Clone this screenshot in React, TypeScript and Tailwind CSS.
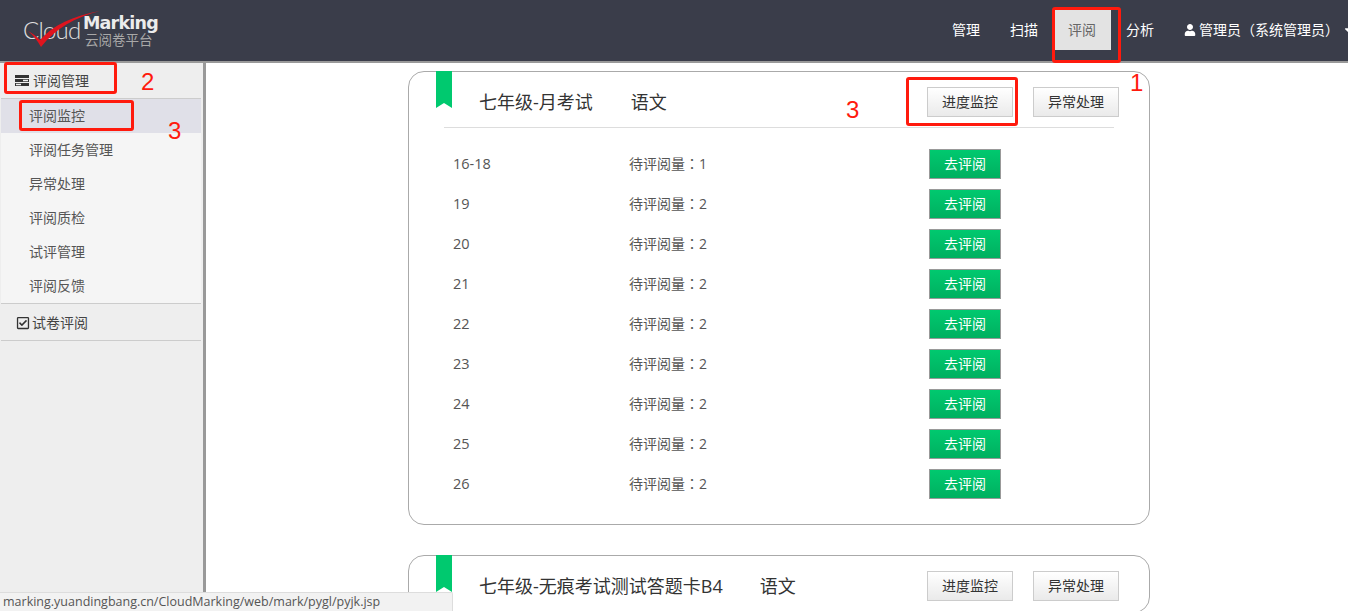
import { FaCaretDown, FaRegCheckSquare, FaUser } from "react-icons/fa";

const navItems = ["管理", "扫描", "评阅", "分析"];
const menuItems = ["评阅监控", "评阅任务管理", "异常处理", "评阅质检", "试评管理", "评阅反馈"];
const tasks = [
  { no: "16-18", count: 1 },
  { no: "19", count: 2 },
  { no: "20", count: 2 },
  { no: "21", count: 2 },
  { no: "22", count: 2 },
  { no: "23", count: 2 },
  { no: "24", count: 2 },
  { no: "25", count: 2 },
  { no: "26", count: 2 },
];

// TC glyphs have the centred full-width punctuation seen in the picture
const punct = "leading-none font-['Noto_Sans_CJK_TC',sans-serif]";

function Logo() {
  return (
    <div className="relative mt-[5px] ml-[23px] h-[50px] w-[140px] shrink-0">
      <span className="absolute top-[10px] left-0 text-[24px] leading-[30px] font-light tracking-[-0.8px] text-[#e0e0e0] font-['Lato',sans-serif]">
        Cloud
      </span>
      <span className="absolute top-[9px] left-[60px] text-[17.5px] leading-[18px] font-bold tracking-[-0.8px] text-[#ececec] font-['DejaVu_Sans',sans-serif]">
        Marking
      </span>
      <span className="absolute top-[27px] left-[62px] text-[13.5px] leading-[14px] text-[#a8a8a8] font-['Noto_Sans_CJK_SC',sans-serif]">
        云阅卷平台
      </span>
      <svg className="absolute top-0 left-0" width="80" height="46" viewBox="0 0 80 46">
        <path d="M5 26 C9 28 13 31 17 35 C30 20 50 11 77 6 C52 12 32 24 18 42 C14 35 10 30 5 26 Z" fill="#e0141e" />
      </svg>
    </div>
  );
}

function Header() {
  return (
    <header className="flex h-[61px] shrink-0 items-start justify-between overflow-hidden bg-[#3a3d4a]">
      <Logo />
      <nav className="mt-[10px] flex h-10 w-[411px] shrink-0 items-stretch overflow-hidden text-sm whitespace-nowrap text-white">
        {navItems.map((item) => (
          <a
            key={item}
            className={`flex items-center px-[15px] ${item === "评阅" ? "bg-[#e3e3e3] text-[#666]" : ""}`}
          >
            {item}
          </a>
        ))}
        <a className="flex shrink-0 items-center gap-[3px] pl-[15px]">
          <FaUser className="size-3" />
          <span>
            管理员<span className={punct}>（</span>系统管理员<span className={punct}>）</span>
          </span>
          <FaCaretDown className="size-3.5" />
        </a>
      </nav>
    </header>
  );
}

function MenuIcon() {
  return (
    <svg width="14" height="11" viewBox="0 0 14 11" className="shrink-0">
      <path d="M0 0H14V3H0ZM0 4H14V7H0ZM0 8H14V11H0Z" fill="#333" />
      <path d="M8 4.7H13V6.3H8ZM1 8.7H6V10.3H1Z" fill="#eee" />
    </svg>
  );
}

function Sidebar() {
  return (
    <aside className="w-[206px] shrink-0 border-r-[3px] border-[#999] bg-[#eee] pr-[2px] pl-px text-sm text-[#444]">
      <div className="flex h-[36px] items-center gap-1 border-b border-[#ccc] pl-[14px]">
        <MenuIcon />
        评阅管理
      </div>
      <ul className="border-b border-[#ccc] bg-[#f5f5f5] text-[#555]">
        {menuItems.map((item, i) => (
          <li key={item} className={`flex h-[34px] items-center pl-7 ${i === 0 ? "bg-[#e0e0e8]" : ""}`}>
            {item}
          </li>
        ))}
      </ul>
      <div className="flex h-[37px] items-center gap-[2px] border-b border-[#ccc] pt-px pl-[15px]">
        <FaRegCheckSquare className="size-[14px] text-[#333]" />
        试卷评阅
      </div>
    </aside>
  );
}

function Ribbon() {
  return (
    <svg className="absolute top-[-1px] left-[27px]" width="16" height="37" viewBox="0 0 16 37">
      <path d="M0 0H16V37L8 32L0 37Z" fill="#00c96f" />
    </svg>
  );
}

function CardHeader({ title, subject, gap }: { title: string; subject: string; gap: string }) {
  return (
    <div className="mx-[35px] flex h-[56px] items-center border-b border-[#ddd] pt-[5px]">
      <h2 className={`ml-[35px] text-lg leading-6 text-[#333] ${gap}`}>{title}</h2>
      <span className="text-lg leading-6 text-[#333]">{subject}</span>
      <div className="mr-[-5px] ml-auto flex gap-5">
        <button className="h-[30px] w-[86px] border border-[#ccc] bg-gradient-to-b from-white to-[#eaeaea] text-sm text-[#333]">
          进度监控
        </button>
        <button className="h-[30px] w-[86px] border border-[#ccc] bg-gradient-to-b from-white to-[#eaeaea] text-sm text-[#333]">
          异常处理
        </button>
      </div>
    </div>
  );
}

function Card({ children }: { children: React.ReactNode }) {
  return <section className="relative w-[742px] rounded-[16px] border border-[#aaa] bg-white">{children}</section>;
}

function Main() {
  return (
    <main className="min-w-0 flex-1 overflow-hidden bg-white pt-2 pl-[202px]">
      <Card>
        <Ribbon />
        <CardHeader title="七年级-月考试" subject="语文" gap="mr-[38px]" />
        <div className="pt-[21px] pb-[15px]">
          {tasks.map((task) => (
            <div key={task.no} className="flex h-10 items-start text-sm text-[#555]">
              <span className="w-[220px] pl-11 text-[14.5px] leading-[30px]">{task.no}</span>
              <span className="w-[300px] leading-[30px]">
                待评阅量<span className={punct}>：</span>
                {task.count}
              </span>
              <button className="h-[30px] w-[72px] border border-[#999] bg-gradient-to-b from-[#00c96f] to-[#00b060] text-sm text-white">
                去评阅
              </button>
            </div>
          ))}
        </div>
      </Card>
      <div className="mt-[30px]">
        <Card>
          <Ribbon />
          <CardHeader title="七年级-无痕考试测试答题卡B4" subject="语文" gap="mr-[37px]" />
        </Card>
      </div>
    </main>
  );
}

function Annotations() {
  const box = "absolute rounded-[3px] border-[3px] border-[#ff1a0d]";
  const mark = "absolute text-[24px] leading-7 text-[#ff1a0d] font-['Liberation_Sans',sans-serif]";
  return (
    <>
      <div className={`${box} top-[7px] left-[1052px] h-[56px] w-[69px]`} />
      <div className={`${box} top-[62px] left-[4px] h-[32px] w-[113px]`} />
      <div className={`${box} top-[100px] left-[19px] h-[31px] w-[115px]`} />
      <div className={`${box} top-[77px] left-[906px] h-[49px] w-[112px]`} />
      <span className={`${mark} top-[69px] left-[1130px]`}>1</span>
      <span className={`${mark} top-[68px] left-[141px]`}>2</span>
      <span className={`${mark} top-[117px] left-[168px]`}>3</span>
      <span className={`${mark} top-[96px] left-[846px]`}>3</span>
    </>
  );
}

export default function App() {
  return (
    <div className="relative flex h-screen flex-col overflow-hidden bg-white font-['Open_Sans','Noto_Sans_CJK_SC',sans-serif]">
      <Header />
      <div className="h-[2px] shrink-0 bg-[#999]" />
      <div className="flex min-h-0 flex-1">
        <Sidebar />
        <Main />
      </div>
      <Annotations />
      <div className="absolute bottom-0 left-0 h-[19px] w-[453px] rounded-tr-[2px] border-t border-r border-[#ddd] bg-[#f2f2f2] pl-[3px] text-[12.5px] leading-[18px] text-[#555]">
        marking.yuandingbang.cn/CloudMarking/web/mark/pygl/pyjk.jsp
      </div>
    </div>
  );
}
